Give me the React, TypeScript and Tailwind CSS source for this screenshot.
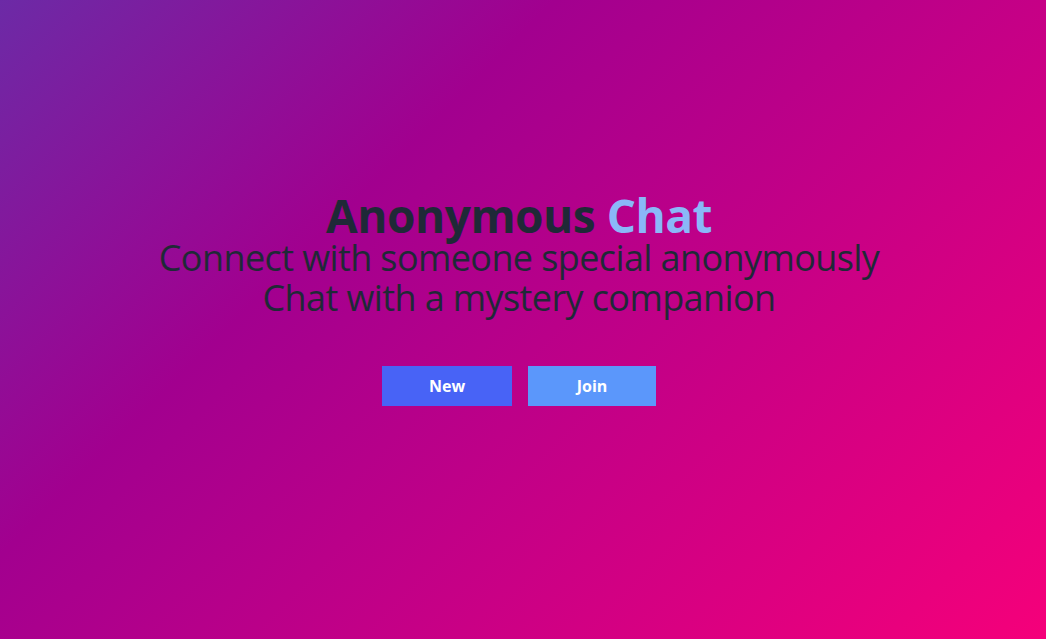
export default function App() {
  return (
    <div
      className="w-full h-[639px] flex flex-col items-center justify-center bg-[linear-gradient(135deg,#6c2aa6_0%,#a2008f_33%,#f5007a_100%)] pb-[42px] pr-[8px]"
      style={{ fontFamily: '"Open Sans", "Noto Sans", sans-serif' }}
    >
      <h1 className="text-[46px] leading-[46px] font-bold text-[#1f2937] tracking-[-0.5px]">
        Anonymous <span className="text-[#8ab8f8]">Chat</span>
      </h1>
      <p className="text-[36px] leading-[40px] text-[#1f2937] text-center tracking-[-0.6px]">
        Connect with someone special anonymously
        <br />
        Chat with a mystery companion
      </p>
      <div className="mt-[48px] flex gap-4">
        <button className="w-[130px] h-[40px] bg-[#4863f6] text-white font-bold text-[16px]">
          New
        </button>
        <button className="w-[128px] h-[40px] bg-[#5b97fb] text-white font-bold text-[16px]">
          Join
        </button>
      </div>
    </div>
  );
}
